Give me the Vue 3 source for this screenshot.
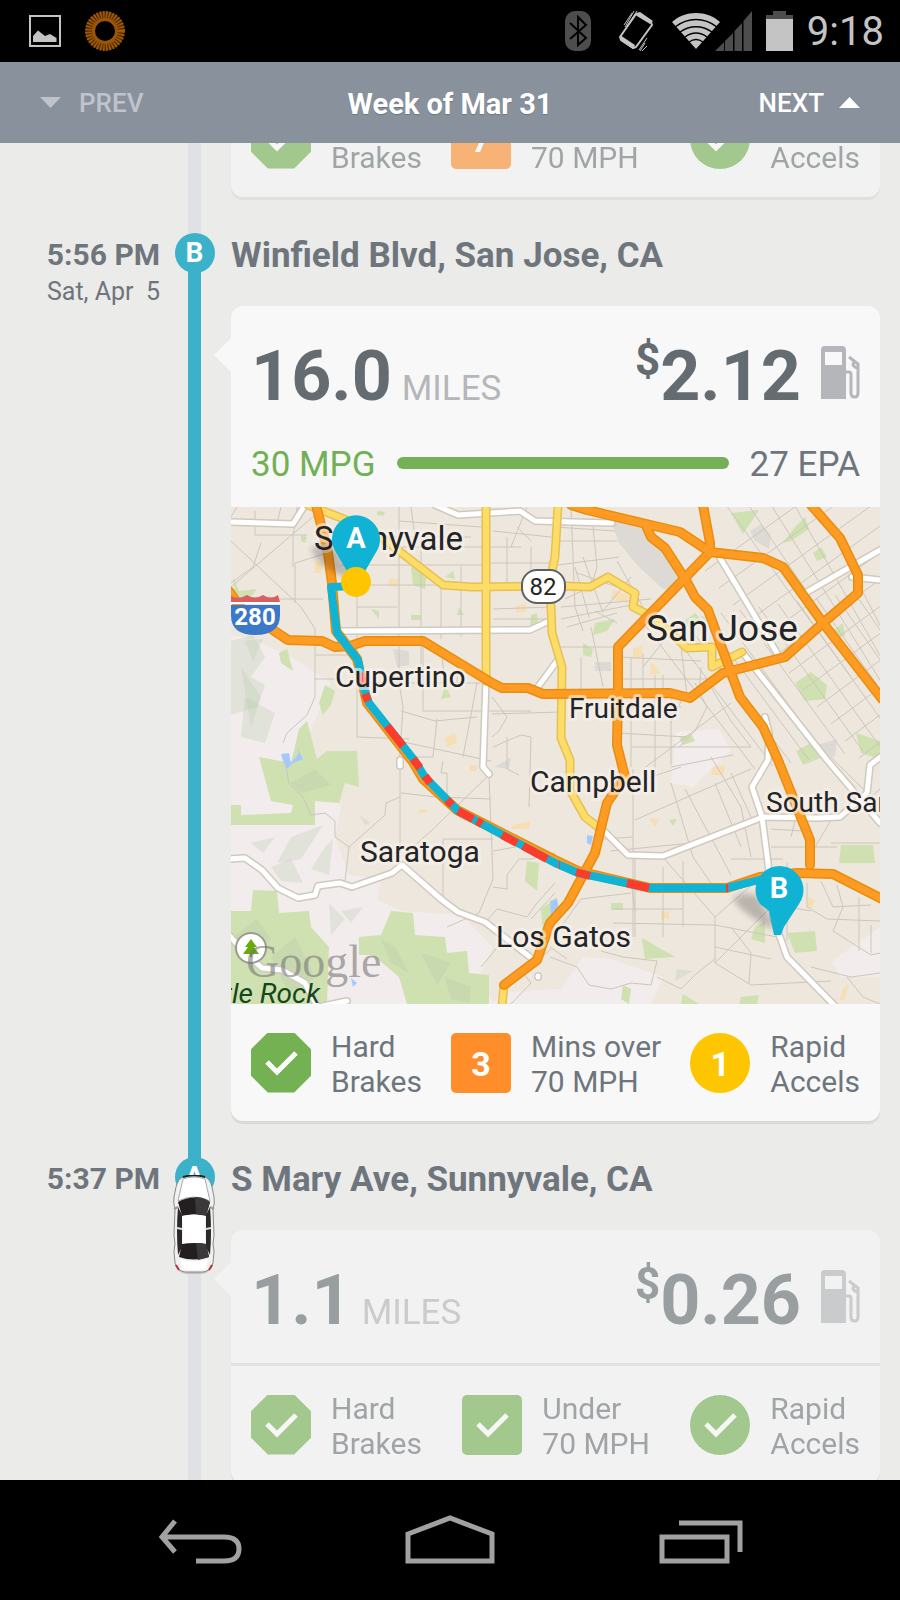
<script setup>
import { ref, onMounted } from 'vue'

const feed = ref(null)

const trips = [
  {
    id: 1,
    faded: true,
    stats: [
      { shape: 'octagon', tone: 'green', value: '', lines: ['Hard', 'Brakes'] },
      { shape: 'square', tone: 'orange', value: '7', lines: ['Mins over', '70 MPH'] },
      { shape: 'circle', tone: 'green', value: '', lines: ['Rapid', 'Accels'] },
    ],
  },
  {
    id: 2,
    marker: 'B',
    time: '5:56 PM',
    date: 'Sat, Apr\u00a0 5',
    place: 'Winfield Blvd, San Jose, CA',
    miles: '16.0',
    cost: '2.12',
    mpg: '30 MPG',
    epa: '27 EPA',
    map: true,
    active: true,
    stats: [
      { shape: 'octagon', tone: 'green', value: '', lines: ['Hard', 'Brakes'] },
      { shape: 'square', tone: 'orange', value: '3', lines: ['Mins over', '70 MPH'] },
      { shape: 'circle', tone: 'yellow', value: '1', lines: ['Rapid', 'Accels'] },
    ],
  },
  {
    id: 3,
    marker: 'A',
    time: '5:37 PM',
    place: 'S Mary Ave, Sunnyvale, CA',
    miles: '1.1',
    cost: '0.26',
    faded: true,
    car: true,
    stats: [
      { shape: 'octagon', tone: 'green', value: '', lines: ['Hard', 'Brakes'] },
      { shape: 'square', tone: 'green', value: '', lines: ['Under', '70 MPH'] },
      { shape: 'circle', tone: 'green', value: '', lines: ['Rapid', 'Accels'] },
    ],
  },
]

// map layers
const hills = [
  'M0 128L22 132L60 150L100 176L84 214L70 245L78 262L110 300L104 330L118 368L150 372L146 392L170 404L230 408L262 440L250 466L262 497L0 497Z',
  'M262 497L270 485L330 482L352 450L380 452L432 470L420 497Z',
  'M445 225L488 222L500 244L484 258L462 280L440 276Z',
  'M600 455L649 420L649 470L610 470Z',
]
const parks = [
  'M48 146L56 142L62 164L50 156Z', 'M94 178L104 184L100 198L92 208L88 196Z',
  'M68 222L76 214L86 252L96 244L126 244L128 280L114 276L108 296L84 294L84 318L0 318L0 298L10 298L10 308L60 306L62 298L40 294L28 250L60 256Z',
  'M0 404L20 404L22 383L46 384L48 406L78 404L80 420L98 440L96 497L0 497Z',
  'M128 430L150 428L160 404L182 406L184 428L214 430L216 446L236 444L238 466L258 468L258 497L176 497L168 470L142 448L128 448Z',
  'M296 354L308 356L306 384L294 374Z', 'M310 402L326 390L324 416L312 424Z',
  'M500 6L528 3L512 27Z', 'M580 165L596 178L594 192L574 194L564 176Z',
  'M565 244L580 236L592 250L572 258Z', 'M625 226L649 234L649 252L630 246Z',
  'M610 338L642 338L644 356L608 356Z', 'M411 431L444 450L414 452Z',
  'M524 420L534 414L534 436L520 432Z', 'M556 426L584 424L586 444L564 446Z',
  'M384 112L376 124L362 128L364 116Z', 'M352 136L362 142L360 150L352 148Z',
  'M180 60L196 64L194 82L182 78Z', 'M214 70L222 64L224 72Z', 'M180 108L190 108L190 113L180 113Z',
  'M140 102L148 104L148 112Z', 'M228 100L233 108L226 108Z', 'M214 178L220 190L210 192Z',
  'M452 115L464 106L472 114L462 120Z', 'M582 46L590 40L596 50L586 54Z',
  'M604 122L612 116L614 128L606 132Z', 'M380 396L392 396L392 403L380 403Z',
  'M392 478L400 482L398 497L390 492Z', 'M452 487L468 497L450 497Z', 'M510 490L528 488L526 497L508 497Z',
  'M438 313L446 312L442 319Z', 'M300 108L306 106L307 121L299 120Z', 'M146 4L154 5L152 9L146 8Z',
  'M564 20L574 10L578 22L560 34L552 36Z', 'M448 231L460 227L464 234L452 238Z',
  'M2 70L8 84L26 82L18 92L4 88Z', 'M70 28L76 30L74 36L70 34Z',
]
const hillShades = [
  'M0 134L22 128L34 150L20 170L34 178L26 200L0 208Z', 'M14 134L32 132L22 154Z',
  'M10 160L30 190L20 220Z', 'M14 190L44 206L34 236L10 230Z', 'M60 330L92 318L70 352L46 356Z',
  'M94 340L102 332L98 368L80 362Z', 'M40 360L60 352L72 376L50 374Z', 'M2 430L26 412L40 432L18 452Z',
  'M40 450L64 430L84 470L58 486Z', 'M150 432L164 440L178 466L160 456Z', 'M190 446L220 456L206 478Z',
  'M60 276L84 262L100 278L70 286Z', 'M110 404L132 400L120 416Z', 'M214 470L240 480L238 496L220 492Z',
  'M98 396L114 412L100 428Z', 'M20 336L44 330L32 346Z', 'M446 462L462 464L444 474Z', 'M128 308L140 316L134 318Z',
]
const townBlocks = [
  'M84 54L92 55L90 66L83 66Z', 'M158 72L168 72L166 80L157 78Z', 'M382 82L402 90L396 96L380 92Z',
  'M402 142L412 138L410 152L402 152Z', 'M420 155L430 166L419 168Z', 'M482 260L494 258L492 268L480 268Z',
  'M214 231L224 226L226 236L216 240Z', 'M282 318L300 314L298 322L280 322Z', 'M578 390L584 394L580 402L576 400Z',
  'M430 405L438 404L438 412L430 412Z', 'M418 311L428 312L424 320Z', 'M284 100L294 96L296 104L286 106Z',
  'M612 482L618 476L614 492L608 494Z', 'M188 302L196 302L196 306L188 306Z', 'M238 258L246 258L246 264L238 264Z',
]
const greyBlocks = [
  'M380 14L414 18L434 42L452 76L442 84L432 82L406 58L388 36Z',
  'M162 142L178 144L178 158L166 160Z', 'M519 24L530 17L540 28L538 42L524 34Z',
  'M364 155L380 155L380 164L364 164Z', 'M586 238L606 232L604 250L588 248Z', 'M264 260L280 250L278 262Z',
]
const water = [
  'M50 247L58 246L60 256L68 246L66 240L72 252L62 256L56 262L52 254Z',
  'M356 328L362 329L360 338L356 336Z', 'M319 394L326 392L328 402L320 410Z', 'M120 471L126 476L122 480Z',
]
const streets = [
  'M6 0L0 10M24 4L24 28L76 28M0 34L70 100L84 122L84 190L76 208L56 226L52 236M0 80L84 8M50 0L46 16M66 0L62 30L62 60',
  'M30 36L22 60L0 76M0 110L10 112M40 92L92 92M64 96L64 56L96 46M84 148L120 148M84 172L110 172',
  'M126 10L126 230L178 232M126 100L166 100M110 58L250 58M126 78L250 78M168 0L168 176L172 200L168 260M126 30L240 30M190 30L190 170',
  'M210 80L210 132M230 60L230 130M168 40L290 40M260 56L320 56M276 30L276 76M300 40L300 80M262 102L320 100M262 112L316 112',
  'M168 14L250 20M180 0L184 30M262 24L320 30M286 20L300 34M296 0L280 40M192 136L192 204L300 204M210 140L214 176M228 152L226 176M126 176L250 176',
  'M261 207L330 205M261 190L276 210L268 224L261 230M170 204L204 214L246 210M246 176L232 250M168 234L260 254M206 212L202 250L170 250',
  'M262 240L290 228L300 230L298 300M276 230L276 262L288 268M258 268L200 324L180 342M258 268L262 372L248 406L216 420',
  'M169 258L169 346M170 286L206 290L260 292M212 254L210 266L216 266L216 290M212 332L212 394M212 332L262 332M262 344L296 338M262 380L276 382L276 368L288 352L300 352L324 346',
  'M169 290L155 296L154 308L118 340L114 374M54 256L58 276L72 290L80 308L94 306L104 314L104 330L118 340M252 418L266 402L296 410L306 396L324 376',
  'M324 20L384 24M327 34L386 34M340 0L344 100L352 124M362 20L366 60L360 80M327 58L388 50M334 92L380 70M330 100L420 92M330 112L400 98M336 120L386 106',
  'M344 60L358 110M352 50L372 106M330 140L386 140M360 120L372 180M350 150L350 184M364 104L386 116M386 54L412 100M400 70L372 104M386 80L346 66',
  'M387 150L470 154M387 172L490 172M400 150L400 260M412 146L412 184M424 168L424 270M440 184L440 258M450 140L456 188M470 160L468 190M432 168L432 184',
  'M387 200L450 200M387 226L456 230M400 240L520 240M412 262L500 196M464 176L476 200L464 224L448 240M480 180L500 214L520 240M436 130L412 160M452 190L440 216',
  'M402 262L402 430M440 260L502 248M390 280L450 260M372 332L402 330M380 344L460 336M404 313L520 262M440 276L462 350L484 382M430 348L484 410M480 250L510 300L520 350',
  'M404 430L404 344M432 360L432 430M382 402L452 402M382 416L484 418M404 404L400 372M452 354L452 420M484 410L484 456L520 478L600 474M484 410L530 370M454 282L500 368M484 276L510 340M500 266L520 310',
  'M484 456L540 400M500 420L520 446L518 476M484 440L540 452M484 418L546 430M319 450L346 460L358 478L380 482L400 476L420 478L426 454L392 450L370 444M426 470L450 482L466 466L484 452',
  'M336 402L364 340L372 328M330 420L350 392L400 386M540 340L606 340M556 356L556 376M540 322L572 324M584 340L602 310M600 250L640 290L649 282M600 336L649 336M570 290L560 330M500 352L552 352',
  'M576 376L576 400L596 412L649 414M606 378L612 400L602 424L640 448L649 446M628 390L628 444M590 374L602 400L640 398M556 434L556 400L580 404M580 460L620 470L649 466M616 470L632 490L649 497M640 418L640 446',
  'M280 497L300 476L292 466M300 460L320 442M250 460L270 436M324 30L319 60M319 440L336 452M324 386L300 412',
]
// San Jose downtown is a skewed grid
const grid = []
for (let i = 0; i < 12; i++) {
  grid.push(`M${414 + i * 19} ${118 - i * 3}L${524 + i * 18} ${262 - i * 3}`)
  grid.push(`M${474 + i * 14} ${64 + i * 17}L${620 + i * 12} ${-40 + i * 18}`)
}
for (let i = 0; i < 5; i++) {
  grid.push(`M${482 + i * 26} ${-20 + i * 4}L${620 + i * 16} ${170 + i * 4}`)
}
const whiteRoads = [
  'M0 15L62 17L74 -2', 'M204 -2L227 8L289 4L304 14L381 16', 'M111 124L299 123L316 115',
  'M326 154L304 184', 'M489 51L546 146', 'M512 146L596 253L619 280L649 316', 'M649 43L576 85', 'M621 70L649 73',
  'M534 210L538 226L537 253L521 280L531 310L537 356L542 410L549 430L556 450L604 499', 'M255 173L252 260L258 267',
  'M372 323L397 348L432 349L532 310L586 311L609 310L636 286L639 258L652 248',
  'M-2 352L14 351L31 363L47 381L67 391L84 388L87 379L109 376L121 380L161 366L171 358L211 393L227 405L254 415L299 450',
  'M-2 428L11 443L31 461L51 463L74 476L86 499M92 499L116 494', 'M169 253L169 259', 'M307 469L307 470',
]
const yellowRoads = [
  'M77 -2L141 23L212 78L241 80L334 79L359 80L377 70L404 86L402 100L422 110L456 141L481 140L481 160L511 145',
  'M255 -2L255 174', 'M327 -2L324 50L319 73L321 126L331 160L330 231L339 253L339 283L354 310L367 320', 'M273 478L271 499',
]
const freeways = [
  'M85 -2L97 46L101 76L105 124L126 152L136 196L182 255L192 272L226 303L324 353L347 364L419 381L496 381L529 370L566 366L602 367L651 392',
  'M-2 84L12 104L42 123L57 133L91 134L104 140L119 139L134 134L192 134L261 176L271 181L297 181L312 187L439 186L459 191L492 166L554 150L592 116L627 86L627 68L609 31L580 -2',
  'M340 -2L356 3L449 25L479 45L532 51L552 60L592 116L651 192',
  'M472 -2L479 36L479 45L387 140L387 186L386 238L394 270L376 296L364 346L337 396L319 416L306 453L273 478',
  'M416 21L420 30L434 41L456 75L464 90L477 103L499 163L509 190L532 220L547 253L559 283L579 333L579 358',
]
const route = 'M125 79L100 80L106 126L127 153L132 178L138 196L184 254L194 270L227 304L324 356L347 366L419 381L496 381L548 368'
const fast = 'M130 166L132 178M134 187L137 194M156 219L172 239M182 252L189 261M194 269L199 276M216 293L221 298M227 304L242 312M246 314L251 317M271 328L286 336M292 339L316 352M328 358L329 358M345 365L359 369M396 376L418 381M495 381L497 381'

const labels = [
  { text: 'Sunnyvale', x: 83, y: 43, size: 33 },
  { text: 'Cupertino', x: 104, y: 180, size: 30 },
  { text: 'San Jose', x: 415, y: 134, size: 37 },
  { text: 'Fruitdale', x: 338, y: 211, size: 28 },
  { text: 'Campbell', x: 299, y: 285, size: 30 },
  { text: 'Saratoga', x: 129, y: 355, size: 30 },
  { text: 'Los Gatos', x: 265, y: 440, size: 30 },
  { text: 'South San Jose', x: 535, y: 305, size: 28 },
]

onMounted(() => {
  feed.value.scrollTop = 63
})
</script>

<template>
  <div class="phone">
    <div class="status">
      <svg width="32" height="32" viewBox="0 0 32 32">
        <rect x="1" y="1" width="30" height="30" fill="none" stroke="#c4c4c4" stroke-width="2" />
        <path d="M4 27V21L9 15.500L16 21L21 19L27.500 23V27Z" fill="#c4c4c4" />
      </svg>
      <svg class="sun" width="40" height="40" viewBox="0 0 40 40" fill="none">
        <circle cx="20" cy="20" r="15" stroke="#4f2c02" stroke-width="9" />
        <circle cx="20" cy="20" r="15.500" stroke="#a35a04" stroke-width="9" stroke-dasharray="1.500 1.220" />
        <circle cx="20" cy="20" r="11.500" stroke="#9c5503" stroke-width="3" />
      </svg>
      <div class="status-right">
        <svg class="bt" width="26" height="40" viewBox="0 0 26 40">
          <rect width="26" height="40" rx="10" fill="#4d4d4d" />
          <path d="M5 12L21 27L13 34V6L21 14L5 28" fill="none" stroke="#000" stroke-width="2" />
        </svg>
        <svg class="vibrate" width="35" height="42" viewBox="0 0 35 42" fill="none" stroke="#c4c4c4">
          <path d="M17 4L32 12L33 15L17 37L14 38L2 30L1 27Z" stroke-width="2" stroke-linejoin="round" />
          <path d="M17 3L21 2L34 11L31 14L18 6Z M1 25L16 35L14 39L2 31Z" fill="#c4c4c4" stroke="none" />
          <path d="M13 3L5 15M15 1L6 17M18 1L8 16M28 28L20 40M26 33L21 41M28 36L23 41" stroke-width="1" />
        </svg>
        <svg class="signals" width="80" height="40" viewBox="0 0 80 40">
          <path d="M0 11C13 -1 35 -1 48 11L24 38Z" fill="#c4c4c4" />
          <path d="M3 16C16 6 32 6 45 16M8 21C18 14 30 14 40 21M13 26C20 21 28 21 35 26M17 31C22 27.500 26 27.500 31 31" fill="none" stroke="#000" stroke-width="1.500" />
          <path d="M43 40L52 31V40ZM53 30L61 22V40H53ZM62.500 20L70 12V40H62.500ZM71.500 10L80 0V40H71.500Z" fill="#4d4d4d" />
        </svg>
        <svg width="27" height="40" viewBox="0 0 27 40">
          <path d="M7 0H20V4H27V8H0V4H7Z" fill="#4d4d4d" />
          <rect y="8" width="27" height="32" fill="#c4c4c4" />
        </svg>
        <span class="clock">9:18</span>
      </div>
    </div>

    <header class="week">
      <button class="week-btn prev" type="button">
        <svg width="21" height="11" viewBox="0 0 21 11"><path d="M0 0H21L10.500 11Z" fill="currentColor" /></svg>
        PREV
      </button>
      <h1>Week of Mar 31</h1>
      <button class="week-btn next" type="button">
        NEXT
        <svg width="21" height="11" viewBox="0 0 21 11"><path d="M0 11H21L10.500 0Z" fill="currentColor" /></svg>
      </button>
    </header>

    <main ref="feed" class="feed">
      <section v-for="trip in trips" :key="trip.id" class="trip">
        <div class="when">
          <div class="time">{{ trip.time }}</div>
          <div class="date">{{ trip.date }}</div>
        </div>

        <div class="rail">
          <span v-if="trip.marker" class="node">{{ trip.marker }}</span>
          <span class="line" :class="{ active: trip.active }"></span>
          <svg v-if="trip.car" class="car" width="44" height="100" viewBox="0 0 44 100">
            <rect x="3" y="6" width="38" height="93" rx="12" fill="#000" opacity=".15" />
            <path d="M11 2Q22 -2 33 2Q38 4 40 12L42 22Q43 28 41 34L42 60Q40 70 42 76L41 88Q39 96 31 97H13Q5 96 3 88L2 76Q4 70 2 60L3 34Q1 28 2 22L4 12Q6 4 11 2Z" fill="#f1f1f1" stroke="#8b8888" stroke-width="1" />
            <path d="M11 2Q22 -1 33 2" fill="none" stroke="#222" stroke-width="2" />
            <path d="M2 34L6 32M42 34L38 32" stroke="#999" stroke-width="2" />
            <path d="M6 32L10 40V72L6 80Q4 56 6 32ZM38 32L34 40V72L38 80Q40 56 38 32Z" fill="#2b2829" />
            <path d="M11 4Q22 0 33 4L38 26Q22 18 6 26Z" fill="#fff" stroke="#aaa" stroke-width="1" />
            <path d="M6 27Q22 18 38 27L34 41Q22 38 10 41Z" fill="#231f20" />
            <path d="M23 22Q32 22 38 27L34 41Q29 39 24 39Z" fill="#3c393a" />
            <path d="M10 41Q22 38 34 41Q31 54 34 69Q22 67 10 69Q13 54 10 41Z" fill="#fff" />
            <path d="M10 69Q22 67 34 69L37 82Q22 87 7 82Z" fill="#231f20" />
            <path d="M24 68Q30 68 34 69L37 82L26 85Z" fill="#3c393a" />
            <path d="M8 84Q22 89 36 84L34 94Q22 96 10 94Z" fill="#fff" />
            <path d="M5 53L10 54M39 53L34 54" stroke="#ddd" stroke-width="2" />
            <path d="M4 90L7 95M40 90L37 95" stroke="#b5323a" stroke-width="2" />
          </svg>
        </div>

        <div class="body">
          <h2 v-if="trip.place" class="place">{{ trip.place }}</h2>
          <article class="card" :class="{ faded: trip.faded, pointed: trip.miles }">
            <div v-if="trip.miles" class="totals">
              <div class="miles"><b>{{ trip.miles }}</b><span>MILES</span></div>
              <div class="cost">
                <span class="dollar">$</span><b>{{ trip.cost }}</b>
                <svg class="pump" width="39" height="54" viewBox="0 0 39 54">
                  <path fill-rule="evenodd" d="M4 0H21Q25 0 25 4V53H0V4Q0 0 4 0ZM4 6V19H21V6Z" fill="#b5b6ba" />
                  <path d="M25 26H28Q30 26 30 29V47Q30 51 33.500 51Q37 51 37 47V18L28 11M33 15L32 19Q34 22 37 22" fill="none" stroke="#b5b6ba" stroke-width="3" />
                </svg>
              </div>
            </div>

            <div v-if="trip.mpg" class="economy">
              <span class="mpg">{{ trip.mpg }}</span>
              <span class="bar"></span>
              <span class="epa">{{ trip.epa }}</span>
            </div>

            <svg v-if="trip.map" class="map" viewBox="0 0 649 497" preserveAspectRatio="xMidYMid slice">
              <defs>
                <filter id="soft"><feGaussianBlur stdDeviation="3" /></filter>
              </defs>
              <rect width="649" height="497" fill="#eee7de" />
              <path v-for="d in hills" :key="d" :d="d" fill="#f3ecec" />
              <path v-for="d in greyBlocks" :key="d" :d="d" fill="#dddad5" />
              <path v-for="d in parks" :key="d" :d="d" fill="#cfe0b1" />
              <path v-for="d in hillShades" :key="d" :d="d" fill="#b9c9ae" opacity=".3" />
              <path v-for="d in townBlocks" :key="d" :d="d" fill="#f6dfb4" />
              <path v-for="d in water" :key="d" :d="d" fill="#a5c9fd" />
              <g fill="none" stroke="#cdc6bb" stroke-width="1">
                <path v-for="d in streets" :key="d" :d="d" />
                <path v-for="d in grid" :key="d" :d="d" />
              </g>
              <g fill="none" stroke-linejoin="round" stroke-linecap="round">
                <path v-for="d in whiteRoads" :key="'c' + d" :d="d" stroke="#d0c9be" stroke-width="8" />
                <path v-for="d in whiteRoads" :key="d" :d="d" stroke="#fff" stroke-width="5" />
                <path v-for="d in yellowRoads" :key="'c' + d" :d="d" stroke="#e6c052" stroke-width="9" />
                <path v-for="d in yellowRoads" :key="d" :d="d" stroke="#fddd67" stroke-width="6" />
                <path v-for="d in freeways" :key="'c' + d" :d="d" stroke="#e88d0e" stroke-width="10" />
                <path v-for="d in freeways" :key="d" :d="d" stroke="#fe9b22" stroke-width="7" />
              </g>
              <path :d="route" fill="none" stroke="#10b3d3" stroke-width="8" stroke-linejoin="round" />
              <path :d="fast" fill="none" stroke="#fb3b2c" stroke-width="8" />

              <path d="M0 108Q0 128 24 128Q49 128 49 108V98H0Z" fill="#3b78c8" />
              <path d="M0 89Q8 93 16 88Q24 93 32 88Q40 93 47 88L49 95H0Z" fill="#d96060" />
              <path d="M0 96H49" stroke="#fff" stroke-width="2" />
              <text x="24" y="118" class="shield interstate">280</text>
              <rect x="291" y="63" width="43" height="33" rx="15" fill="#fff" stroke="#5e6062" stroke-width="2" />
              <text x="312" y="88" class="shield">82</text>

              <text v-for="l in labels" :key="l.text" :x="l.x" :y="l.y" :font-size="l.size" class="town">{{ l.text }}</text>

              <circle cx="20" cy="441" r="15" fill="#fff" stroke="#999b90" stroke-width="2" />
              <path d="M20 432L26 440H23L28 447H21V450H19V447H12L17 440H14Z" fill="#69ac08" />
              <text x="15" y="470" class="google">Google</text>
              <text x="89" y="496" class="peak">Castle Rock</text>

              <path d="M80 42Q96 30 108 46L122 72Q90 64 80 42Z" fill="#000" opacity=".22" filter="url(#soft)" />
              <path d="M502 392Q514 382 528 390L546 424Q512 408 502 392Z" fill="#000" opacity=".22" filter="url(#soft)" />
              <path d="M125 80L106 47A24 24 0 1 1 144 47Z" fill="#10b3d3" />
              <circle cx="125" cy="75" r="15" fill="#fdc600" />
              <path d="M538 404L543 428H550L553 420L568 397A24 24 0 1 0 529 397Z" fill="#10b3d3" />
              <text x="125" y="41" class="pin">A</text>
              <text x="548" y="391" class="pin">B</text>
            </svg>

            <div v-else-if="trip.miles" class="divider"></div>

            <ul class="stats">
              <li v-for="s in trip.stats" :key="s.lines[0]">
                <span class="badge" :class="[s.shape, s.tone]">
                  <svg v-if="!s.value" width="60" height="60" viewBox="0 0 60 60">
                    <path d="M16 29L26 39L45 20" fill="none" stroke="#fff" stroke-width="5" />
                  </svg>
                  <template v-else>{{ s.value }}</template>
                </span>
                <span class="label">{{ s.lines[0] }}<br />{{ s.lines[1] }}</span>
              </li>
            </ul>
          </article>
        </div>
      </section>
    </main>

    <nav class="softkeys">
      <button type="button" aria-label="Back">
        <svg width="84" height="50" viewBox="0 0 84 50">
          <path d="M17 6L4 22L17 37M4 22H66Q81 22 81 34Q81 46 66 46H38" />
        </svg>
      </button>
      <button type="button" aria-label="Home">
        <svg width="90" height="50" viewBox="0 0 90 50">
          <path d="M3 19L45 3L87 19V46H3Z" />
        </svg>
      </button>
      <button type="button" aria-label="Recent apps">
        <svg width="86" height="50" viewBox="0 0 86 50">
          <path d="M5 22H70V46H5ZM22 8H83V37" />
        </svg>
      </button>
    </nav>
  </div>
</template>

<style>
body {
  background: #ebebe9;
}
</style>

<style scoped>
.phone {
  display: flex;
  flex-direction: column;
  height: 100vh;
  font-family: Roboto, sans-serif;
  color: #6e757c;
}

button {
  padding: 0;
  border: 0;
  background: none;
  font: inherit;
}

svg {
  display: block;
  flex: none;
}

/* system bar */
.status {
  display: flex;
  align-items: center;
  height: 62px;
  padding: 0 16px 0 29px;
  background: #000;
}

.sun {
  margin-left: 24px;
}

.status-right {
  display: flex;
  align-items: center;
  gap: 14px;
  margin-left: auto;
}

.bt {
  margin-right: 14px;
}

.vibrate {
  margin-right: 4px;
}

.clock {
  font-size: 40px;
  color: #c4c4c4;
}

/* week switcher */
.week {
  display: grid;
  grid-template-columns: 1fr auto 1fr;
  align-items: center;
  height: 81px;
  padding: 0 40px;
  background: #89919d;
  color: #fff;
  text-shadow: 0 1px 1px rgba(0, 0, 0, .2);
}

.week h1 {
  margin: 0;
  padding-top: 3px;
  font-size: 29px;
  font-weight: 700;
}

.week-btn {
  display: flex;
  align-items: center;
  gap: 18px;
  font-size: 26px;
  font-weight: 500;
  color: #fff;
}

.prev {
  color: #c0c4ca;
}

.next {
  gap: 15px;
  justify-self: end;
}

/* timeline */
.feed {
  flex: 1;
  min-height: 0;
  overflow-y: auto;
  scrollbar-width: none;
  background: #ebebe9;
}

.trip {
  display: grid;
  grid-template-columns: 160px 69px 1fr;
}

.when {
  text-align: right;
}

.time {
  font-size: 30px;
  line-height: 44px;
  font-weight: 700;
}

.date {
  font-size: 25px;
  line-height: 30px;
}

.rail {
  position: relative;
  display: flex;
  flex-direction: column;
  align-items: center;
}

.node {
  z-index: 1;
  width: 40px;
  height: 40px;
  margin-bottom: -4px;
  border-radius: 50%;
  background: #3bb1ca;
  color: #fff;
  font-size: 28px;
  line-height: 40px;
  font-weight: 700;
  text-align: center;
}

.line {
  flex: 1;
  width: 13px;
  margin-bottom: -2px;
  background: #e0e1e4;
}

.line.active {
  background: #3bb1ca;
}

.car {
  position: absolute;
  z-index: 2;
  top: 18px;
  left: 12px;
}

.body {
  min-width: 0;
  padding: 0 20px 36px 2px;
}

.place {
  margin: 0 0 28px;
  font-size: 35px;
  line-height: 45px;
  font-weight: 700;
}

.card {
  position: relative;
  border-radius: 12px;
  background: #f8f8f8;
  box-shadow: 0 3px 0 #dadad9;
}

.faded {
  opacity: .6;
}

.pointed::before {
  content: '';
  position: absolute;
  top: 32px;
  left: -17px;
  width: 17px;
  height: 34px;
  background: #f8f8f8;
  clip-path: polygon(100% 0, 100% 100%, 0 50%);
}

.totals {
  display: flex;
  justify-content: space-between;
  padding: 29px 20px 22px;
  line-height: 82px;
  color: #646c72;
}

.totals b {
  font-size: 70px;
}

.miles {
  display: flex;
  align-items: baseline;
  gap: 10px;
}

.miles span {
  font-size: 35px;
  line-height: 40px;
  color: #b5b6ba;
}

.cost {
  display: flex;
  align-items: flex-start;
}

.dollar {
  font-size: 44px;
  font-weight: 700;
  line-height: 50px;
}

.pump {
  margin: 11px 0 0 20px;
}

.economy {
  display: flex;
  align-items: center;
  gap: 21px;
  padding: 0 20px 16px;
  font-size: 35px;
  line-height: 52px;
}

.mpg {
  color: #72b055;
}

.bar {
  flex: 1;
  height: 12px;
  margin-bottom: 4px;
  border-radius: 6px;
  background: #75b056;
}

.map {
  width: 100%;
  height: auto;
}

.town {
  fill: #222426;
  stroke: rgba(247, 242, 235, .65);
  stroke-width: 6px;
  stroke-linejoin: round;
  paint-order: stroke;
}

.shield {
  font-size: 24px;
  text-anchor: middle;
  fill: #222426;
}

.interstate {
  font-weight: 700;
  fill: #fff;
}

.google {
  font-family: "Liberation Serif", serif;
  font-size: 46px;
  fill: #777;
  fill-opacity: .6;
}

.peak {
  font-size: 28px;
  font-style: italic;
  text-anchor: end;
  fill: #14481a;
}

.pin {
  font-size: 29px;
  font-weight: 700;
  text-anchor: middle;
  fill: #fff;
}

.divider {
  height: 3px;
  background: #dcdde2;
}

.stats {
  display: flex;
  justify-content: space-between;
  margin: 0;
  padding: 22px 20px;
  list-style: none;
}

.stats li {
  display: flex;
  align-items: center;
  gap: 20px;
}

.badge {
  width: 60px;
  height: 60px;
  color: #fff;
  font-size: 34px;
  line-height: 62px;
  font-weight: 700;
  text-align: center;
}

.octagon {
  clip-path: polygon(28% 0, 72% 0, 100% 28%, 100% 72%, 72% 100%, 28% 100%, 0 72%, 0 28%);
}

.square {
  border-radius: 5px;
}

.circle {
  border-radius: 50%;
}

.green {
  background: #73b153;
}

.orange {
  background: #ff8d29;
}

.yellow {
  background: #fdc600;
}

.label {
  padding-top: 3px;
  font-size: 30px;
  line-height: 35px;
}

/* navigation keys */
.softkeys {
  display: grid;
  grid-template-columns: repeat(3, 1fr);
  height: 120px;
  padding: 0 75px;
  background: #000;
}

.softkeys button {
  display: flex;
  align-items: center;
  justify-content: center;
}

.softkeys path {
  fill: none;
  stroke: #a1a1a1;
  stroke-width: 5;
}
</style>
